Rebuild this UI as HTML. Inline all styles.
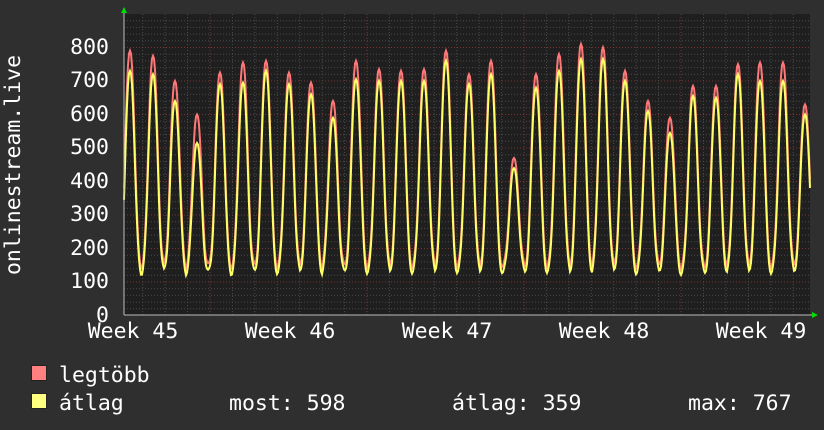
<!DOCTYPE html>
<html><head><meta charset="utf-8"><style>
html,body{margin:0;padding:0;background:#2f2f2f;}
body{width:824px;height:430px;overflow:hidden;position:relative;font-family:"DejaVu Sans Mono","Liberation Mono",monospace;color:#fff;}
svg{position:absolute;left:0;top:0;}
text{font-family:"DejaVu Sans Mono","Liberation Mono",monospace;fill:#fff;font-size:21.5px;}
</style></head><body>
<svg id="g" width="824" height="430" xmlns="http://www.w3.org/2000/svg">
<rect x="124" y="14" width="686" height="301" fill="#1f1f1f"/>
<g id="grid"></g>
<g id="data"></g>
<line x1="124" y1="315" x2="814" y2="315" stroke="#bbb" stroke-width="1"/>
<line x1="124" y1="10" x2="124" y2="315" stroke="#bbb" stroke-width="1"/>
<polygon points="121,13 127,13 124,7" fill="#00dd00"/>
<polygon points="812,312 812,318 818,315" fill="#00dd00"/>
<g text-anchor="end">
<text x="109" y="54">800</text><text x="109" y="87">700</text><text x="109" y="121">600</text>
<text x="109" y="154">500</text><text x="109" y="188">400</text><text x="109" y="221">300</text>
<text x="109" y="255">200</text><text x="109" y="288">100</text><text x="109" y="322">0</text>
</g>
<g text-anchor="middle">
<text x="133" y="338">Week 45</text><text x="290" y="338">Week 46</text><text x="447" y="338">Week 47</text>
<text x="604" y="338">Week 48</text><text x="761" y="338">Week 49</text>
</g>
<text transform="translate(20,165) rotate(-90)" text-anchor="middle">onlinestream.live</text>
<rect x="31.5" y="365.5" width="15" height="15" fill="#ff8080" stroke="#222"/>
<rect x="31.5" y="393.5" width="15" height="15" fill="#ffff80" stroke="#222"/>
<text x="59" y="382">legtöbb</text>
<text x="59" y="410">átlag</text>
<text x="229" y="410">most: 598</text>
<text x="452" y="410">átlag: 359</text>
<text x="688" y="410">max: 767</text>
</svg>
<script>
var ns="http://www.w3.org/2000/svg",grid=document.getElementById('grid'),data=document.getElementById('data');
function ln(x1,y1,x2,y2,c){var l=document.createElementNS(ns,'line');l.setAttribute('x1',x1);l.setAttribute('y1',y1);l.setAttribute('x2',x2);l.setAttribute('y2',y2);l.setAttribute('stroke',c);l.setAttribute('stroke-dasharray','1,2');grid.appendChild(l);}
function Y(v){return 315.5-v*0.335;}
for(var v=20;v<=880;v+=20){var maj=v%100==0;ln(124,Y(v),810,Y(v),maj?'#7a3434':'#4a4a4a');}
for(var k=-4;k<31;k++){var x=210+k*22.43;if(x<=124||x>=810)continue;var maj=Math.abs(((k%7)+7)%7)==0;ln(x,14,x,315,maj?'#7a3434':'#4a4a4a');}
var px=[130,153,175,197,220,243,266,289,311,333,356,379,401,424,446,469,491,514,536,559,581,603,625,648,670,693,716,738,760,783,805];
var pr=[790,775,700,600,725,755,760,725,695,640,760,735,730,735,790,720,760,470,720,780,810,800,730,640,590,685,685,750,755,755,630];
var py=[730,720,640,515,690,695,730,690,660,590,705,700,700,700,760,690,720,440,680,730,765,765,700,610,545,655,650,720,700,700,600];
function val(x,peaks,mn){var best=mn;for(var i=0;i<px.length;i++){var t=(x-px[i])/22.43;var d=Math.abs(t)<0.6?Math.exp(-Math.pow(Math.abs(t)/0.27,2.4)):0;var v=mn+(peaks[i]-mn)*d;if(v>best)best=v;}return best;}
function poly(peaks,mn,c){var p=[];for(var x=124;x<=810;x+=1){var v=val(x,peaks,mn+10*Math.sin(x*0.7));p.push(x+','+Y(v).toFixed(1));}var e=document.createElementNS(ns,'polyline');e.setAttribute('points',p.join(' '));e.setAttribute('fill','none');e.setAttribute('stroke',c);e.setAttribute('stroke-width','2');data.appendChild(e);}
poly(pr,140,'#ff7878');poly(py,122,'#ffff66');
</script>
</body></html>
